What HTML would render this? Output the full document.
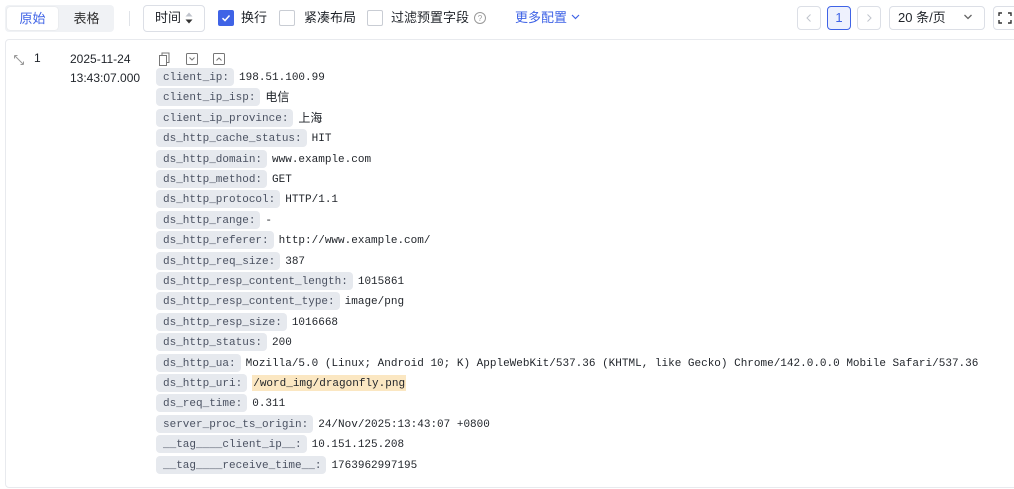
<!DOCTYPE html>
<html><head><meta charset="utf-8"><style>
*{box-sizing:border-box;margin:0;padding:0}
body{width:1014px;height:489px;overflow:hidden;background:#fff;font-family:"Liberation Sans","Noto Sans CJK SC",sans-serif;color:#1f2329;position:relative}
.abs{position:absolute}
.seg{left:5px;top:5px;width:109px;height:27px;background:#f0f2f5;border-radius:4px}
.seg .on{position:absolute;left:2px;top:2px;width:51px;height:23px;background:#fff;border-radius:3px;color:#3f63e6;font-size:13px;line-height:23px;text-align:center;box-shadow:0 0 1px rgba(0,0,0,.15)}
.seg .off{position:absolute;left:56px;top:2px;width:51px;height:23px;font-size:13px;line-height:23px;text-align:center;color:#333}
.btn{border:1px solid #dcdfe6;border-radius:4px;background:#fff}
.cb{width:15px;height:15px;border:1px solid #c9cdd4;border-radius:2px;background:#fff}
.t13{font-size:13px;line-height:16px}
.mono{font-family:"Liberation Mono",monospace;font-size:11px}
.row{position:absolute;left:156px;height:18px;display:flex;align-items:flex-start;white-space:nowrap}
.chip{display:block;background:#e6e9ee;border-radius:4px;height:18px;line-height:14px;padding:3px 5px 0 7px;color:#4b5262;margin-right:5px;overflow:hidden}
.val{display:block;color:#1f2329;line-height:14px;padding-top:3px}
</style></head><body>
<div class="abs seg"><div class="on">原始</div><div class="off">表格</div></div>
<div class="abs" style="left:129px;top:11px;width:1px;height:15px;background:#e0e3e8"></div>
<div class="abs btn" style="left:143px;top:5px;width:62px;height:27px"></div>
<div class="abs t13" style="left:155px;top:10px">时间</div>
<svg class="abs" style="left:185px;top:11px" width="8" height="14"><path d="M0.5 5.5L4 1.5L7.5 5.5Z" fill="#c0c4cc"/><path d="M0.5 8.5L4 12.5L7.5 8.5Z" fill="#333"/></svg>
<div class="abs" style="left:218px;top:10px;width:16px;height:16px;background:#3f63e6;border-radius:2px"></div>
<svg class="abs" style="left:218px;top:10px" width="16" height="16"><path d="M4.5 8.2L7 10.5L11.5 5.5" stroke="#fff" stroke-width="1.5" fill="none"/></svg>
<div class="abs t13" style="left:241px;top:10px">换行</div>
<div class="abs cb" style="left:279px;top:10px;width:16px;height:16px"></div>
<div class="abs t13" style="left:304px;top:10px">紧凑布局</div>
<div class="abs cb" style="left:367px;top:10px;width:16px;height:16px"></div>
<div class="abs t13" style="left:391px;top:10px">过滤预置字段</div>
<svg class="abs" style="left:473px;top:11px" width="14" height="14"><circle cx="7" cy="7" r="5.5" stroke="#999" fill="none"/><text x="7" y="10" font-size="8" text-anchor="middle" fill="#999" font-family="Liberation Sans">?</text></svg>
<div class="abs t13" style="left:515px;top:10px;color:#3f63e6">更多配置</div>
<svg class="abs" style="left:570px;top:13px" width="11" height="8"><path d="M2 2L5.5 5.5L9 2" stroke="#3f63e6" stroke-width="1.2" fill="none"/></svg>
<div class="abs btn" style="left:797px;top:6px;width:24px;height:24px"></div>
<svg class="abs" style="left:797px;top:6px" width="24" height="24"><path d="M13.5 8.5L10 12L13.5 15.5" stroke="#c0c4cc" fill="none"/></svg>
<div class="abs" style="left:827px;top:6px;width:24px;height:24px;border:1px solid #3f63e6;border-radius:4px;background:#eef1fd;color:#3f63e6;font-size:13px;line-height:22px;text-align:center">1</div>
<div class="abs btn" style="left:857px;top:6px;width:24px;height:24px"></div>
<svg class="abs" style="left:857px;top:6px" width="24" height="24"><path d="M10.5 8.5L14 12L10.5 15.5" stroke="#c0c4cc" fill="none"/></svg>
<div class="abs btn" style="left:889px;top:6px;width:96px;height:24px"></div>
<div class="abs t13" style="left:898px;top:10px">20 条/页</div>
<svg class="abs" style="left:963px;top:13px" width="10" height="8"><path d="M1.5 2L5 5.5L8.5 2" stroke="#666" stroke-width="1.3" fill="none"/></svg>
<div class="abs btn" style="left:993px;top:6px;width:30px;height:24px"></div>
<svg class="abs" style="left:993px;top:6px" width="21" height="24"><path d="M6 10V7H9M15 7H18V10M18 14V17H15M9 17H6V14" stroke="#333" stroke-width="1.4" fill="none"/></svg>
<div class="abs" style="left:5px;top:39px;width:1020px;height:449px;border:1px solid #e8eaee;border-radius:4px"></div>
<svg class="abs" style="left:13px;top:54px" width="12" height="12"><path d="M1.5 1.5L10.5 10.5M1.5 1.5V4.5M1.5 1.5H4.5M10.5 10.5V7.5M10.5 10.5H7.5" stroke="#999" fill="none"/></svg>
<div class="abs" style="left:34px;top:50px;font-size:12px;line-height:16px">1</div>
<div class="abs" style="left:70px;top:50px;font-size:12px;line-height:19px">2025-11-24<br>13:43:07.000</div>
<svg class="abs" style="left:157px;top:51px" width="80" height="16"><path d="M2.5 4.5H9.5V14.5H2.5Z M5 4.5V2H12V11.5H9.5" stroke="#777" fill="none"/><rect x="29.5" y="2.5" width="11" height="11" stroke="#777" fill="none" rx="1"/><path d="M32.5 6.5L35 9L37.5 6.5" stroke="#777" fill="none"/><rect x="56.5" y="2.5" width="11" height="11" stroke="#777" fill="none" rx="1"/><path d="M59.5 9.5L62 7L64.5 9.5" stroke="#777" fill="none"/></svg>
<div class="mono">
<div class="row" style="top:68px"><span class="chip">client_ip:</span><span class="val">198.51.100.99</span></div>
<div class="row" style="top:88.4px"><span class="chip">client_ip_isp:</span><span class="val" style="font-family:'Noto Sans CJK SC',sans-serif;font-size:12px;padding-top:1px;line-height:16px">电信</span></div>
<div class="row" style="top:108.8px"><span class="chip">client_ip_province:</span><span class="val" style="font-family:'Noto Sans CJK SC',sans-serif;font-size:12px;padding-top:1px;line-height:16px">上海</span></div>
<div class="row" style="top:129.2px"><span class="chip">ds_http_cache_status:</span><span class="val">HIT</span></div>
<div class="row" style="top:149.6px"><span class="chip">ds_http_domain:</span><span class="val">www.example.com</span></div>
<div class="row" style="top:170px"><span class="chip">ds_http_method:</span><span class="val">GET</span></div>
<div class="row" style="top:190.4px"><span class="chip">ds_http_protocol:</span><span class="val">HTTP/1.1</span></div>
<div class="row" style="top:210.8px"><span class="chip">ds_http_range:</span><span class="val">-</span></div>
<div class="row" style="top:231.2px"><span class="chip">ds_http_referer:</span><span class="val">http://www.example.com/</span></div>
<div class="row" style="top:251.6px"><span class="chip">ds_http_req_size:</span><span class="val">387</span></div>
<div class="row" style="top:272px"><span class="chip">ds_http_resp_content_length:</span><span class="val">1015861</span></div>
<div class="row" style="top:292.4px"><span class="chip">ds_http_resp_content_type:</span><span class="val">image/png</span></div>
<div class="row" style="top:312.8px"><span class="chip">ds_http_resp_size:</span><span class="val">1016668</span></div>
<div class="row" style="top:333.2px"><span class="chip">ds_http_status:</span><span class="val">200</span></div>
<div class="row" style="top:353.6px"><span class="chip">ds_http_ua:</span><span class="val">Mozilla/5.0 (Linux; Android 10; K) AppleWebKit/537.36 (KHTML, like Gecko) Chrome/142.0.0.0 Mobile Safari/537.36</span></div>
<div class="row" style="top:374px"><span class="chip">ds_http_uri:</span><span class="val" style="margin-top:1px;background:#fbe7c2;padding:2px 1px 0;line-height:14px;height:16px">/word_img/dragonfly.png</span></div>
<div class="row" style="top:394.4px"><span class="chip">ds_req_time:</span><span class="val">0.311</span></div>
<div class="row" style="top:414.8px"><span class="chip">server_proc_ts_origin:</span><span class="val">24/Nov/2025:13:43:07 +0800</span></div>
<div class="row" style="top:435.2px"><span class="chip">__tag____client_ip__:</span><span class="val">10.151.125.208</span></div>
<div class="row" style="top:455.6px"><span class="chip">__tag____receive_time__:</span><span class="val">1763962997195</span></div>
</div>
</body></html>
